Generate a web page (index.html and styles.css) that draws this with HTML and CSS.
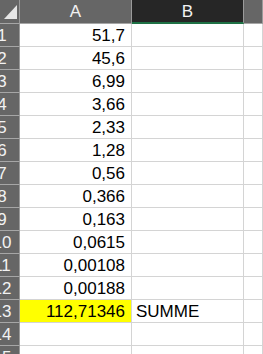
FILE: index.html
```html
<!DOCTYPE html>
<html lang="de">
<head>
<meta charset="UTF-8" />
<meta name="viewport" content="width=device-width, initial-scale=1" />
<title>Mappe1</title>
<link rel="stylesheet" href="styles.css">
</head>
<body>

<div class="sheet">
  <div class="corner">
    <svg width="13" height="14" viewBox="0 0 13 14"><polygon points="13,0 13,14 0,14" fill="#e6e6e6"/></svg>
  </div>
  <div class="col-head">A</div>
  <div class="col-head active">B</div>
  <div class="col-head"></div>

  <div class="row-head">1</div><div class="cell num">51,7</div><div class="cell"></div><div class="cell"></div>
  <div class="row-head">2</div><div class="cell num">45,6</div><div class="cell"></div><div class="cell"></div>
  <div class="row-head">3</div><div class="cell num">6,99</div><div class="cell"></div><div class="cell"></div>
  <div class="row-head">4</div><div class="cell num">3,66</div><div class="cell"></div><div class="cell"></div>
  <div class="row-head">5</div><div class="cell num">2,33</div><div class="cell"></div><div class="cell"></div>
  <div class="row-head">6</div><div class="cell num">1,28</div><div class="cell"></div><div class="cell"></div>
  <div class="row-head">7</div><div class="cell num">0,56</div><div class="cell"></div><div class="cell"></div>
  <div class="row-head">8</div><div class="cell num">0,366</div><div class="cell"></div><div class="cell"></div>
  <div class="row-head">9</div><div class="cell num">0,163</div><div class="cell"></div><div class="cell"></div>
  <div class="row-head">10</div><div class="cell num">0,0615</div><div class="cell"></div><div class="cell"></div>
  <div class="row-head">11</div><div class="cell num">0,00108</div><div class="cell"></div><div class="cell"></div>
  <div class="row-head">12</div><div class="cell num">0,00188</div><div class="cell"></div><div class="cell"></div>
  <div class="row-head">13</div><div class="cell num total">112,71346</div><div class="cell">SUMME</div><div class="cell"></div>
  <div class="row-head">14</div><div class="cell"></div><div class="cell"></div><div class="cell"></div>
  <div class="row-head">15</div><div class="cell"></div><div class="cell"></div><div class="cell"></div>
</div>

</body>
</html>
```
FILE: styles.css
```css
body {
  margin: 0;
  background: #ffffff;
  font-family: "Liberation Sans", Arial, sans-serif;
  overflow: hidden;
}

.sheet {
  display: grid;
  grid-template-columns: 35px 112px 112px 1fr;
  grid-auto-rows: 23px;
  grid-template-rows: 24px;
  margin-left: -15px;
  font-size: 17px;
}

.corner,
.col-head {
  background: #666666;
  border-right: 1px solid #9a9a9a;
  border-bottom: 1px solid #a6a6a6;
  box-sizing: border-box;
}

.corner {
  display: flex;
  justify-content: flex-end;
  align-items: flex-end;
  padding: 0 2px 4px 0;
}

.col-head {
  display: flex;
  justify-content: center;
  align-items: flex-end;
  color: #f2f2f2;
  font-size: 17px;
  line-height: 20px;
  padding-bottom: 1px;
}

.col-head.active {
  background: #262626;
  border-bottom: 2px solid #1e7145;
  padding-bottom: 0;
}

.row-head {
  display: flex;
  justify-content: center;
  align-items: flex-end;
  background: #666666;
  color: #f2f2f2;
  font-size: 17px;
  line-height: 20px;
  border-right: 1px solid #9a9a9a;
  border-bottom: 1px solid #a6a6a6;
  box-sizing: border-box;
}

.cell {
  display: flex;
  align-items: flex-end;
  padding: 0 4px;
  color: #000000;
  line-height: 20px;
  border-right: 1px solid #d4d4d4;
  border-bottom: 1px solid #d4d4d4;
  box-sizing: border-box;
  white-space: nowrap;
}

.cell.num {
  justify-content: flex-end;
  padding-right: 6px;
}

.cell.total {
  background: #ffff00;
}
```
